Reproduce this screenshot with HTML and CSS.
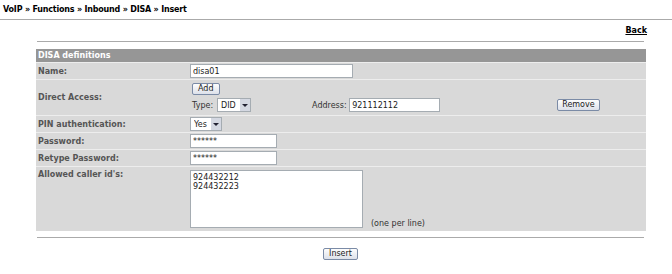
FILE: index.html
```html
<!DOCTYPE html>
<html lang="en">
<head>
    <meta charset="UTF-8">
    <title>VoIP - DISA - Insert</title>
    <link rel="stylesheet" href="styles.css">
</head>
<body>

<div class="crumbs">VoIP &raquo; Functions &raquo; Inbound &raquo; DISA &raquo; Insert</div>

<div class="content">
    <div class="back"><a href="#">Back</a></div>

    <table class="form-table">
        <tr>
            <th colspan="2">DISA definitions</th>
        </tr>
        <tr>
            <td class="label">Name:</td>
            <td><input type="text" class="txt name" value="disa01"></td>
        </tr>
        <tr class="tall">
            <td class="label">Direct Access:</td>
            <td class="access">
                <button class="btn add">Add</button>
                <div class="access-row">
                    <span class="type">Type:
                        <span class="sel"><select><option>DID</option></select><i></i></span>
                    </span>
                    <span class="addr">Address: <input type="text" class="txt address" value="921112112"></span>
                    <button class="btn remove">Remove</button>
                </div>
            </td>
        </tr>
        <tr>
            <td class="label">PIN authentication:</td>
            <td><span class="sel"><select><option>Yes</option><option>No</option></select><i></i></span></td>
        </tr>
        <tr>
            <td class="label">Password:</td>
            <td><input type="text" class="txt pass" value="******"></td>
        </tr>
        <tr>
            <td class="label">Retype Password:</td>
            <td><input type="text" class="txt pass" value="******"></td>
        </tr>
        <tr class="last">
            <td class="label">Allowed caller id's:</td>
            <td>
                <div class="callers">
                    <textarea>924432212
924432223</textarea>
                    <span class="hint">(one per line)</span>
                </div>
            </td>
        </tr>
    </table>

    <div class="actions">
        <button class="btn">Insert</button>
    </div>
</div>

</body>
</html>
```

FILE: styles.css
```css
body {
    margin: 0;
    font-family: 'DejaVu Sans', Verdana, sans-serif;
    font-size: 8px;
    color: #444;
    background: #fff;
}

.crumbs {
    padding: 5px 3px 5px;
    line-height: 9px;
    font-weight: bold;
    color: #000;
    letter-spacing: -0.2px;
    border-bottom: 1px solid #aaa;
}

.content {
    margin: 0 26px 0 36px;
}

.back {
    text-align: right;
    line-height: 9px;
    padding: 6px 0 6px;
    border-bottom: 1px solid #aaa;
    margin: 0 2px 0 1px;
}

.back a {
    color: #000;
    font-weight: bold;
    text-decoration: underline;
    margin-right: -3px;
}

.form-table {
    width: 100%;
    margin-top: 7px;
    border-collapse: separate;
    border-spacing: 0;
}

.form-table th {
    background: #969696;
    color: #fff;
    text-align: left;
    font-weight: bold;
    padding: 0 2px;
    height: 13px;
    box-sizing: border-box;
}

.form-table td {
    background: #d9d9d9;
    border-top: 1px solid #ededed;
    padding: 0 2px;
    height: 17px;
    box-sizing: border-box;
    vertical-align: middle;
}

.form-table tr.tall td {
    height: 36px;
}

.form-table tr.last td {
    height: 65px;
    vertical-align: top;
}

.form-table td.label {
    width: 152px;
    font-weight: bold;
    color: #555;
}

.form-table tr.last td.label {
    padding-top: 3px;
}

.txt {
    font-family: 'DejaVu Sans', sans-serif;
    font-size: 8px;
    color: #222;
    border: 1px solid #a5acb2;
    background: #fff;
    height: 14px;
    padding: 0 2px;
    box-sizing: border-box;
    margin: 0;
    vertical-align: middle;
}

.txt.name { width: 163px; }
.txt.pass { width: 87px; }
.txt.address { width: 91px; }

.btn {
    font-family: 'DejaVu Sans', sans-serif;
    font-size: 8px;
    color: #222;
    height: 12px;
    padding: 0 5px;
    line-height: 10px;
    border: 1px solid #7b8ba6;
    border-radius: 2px;
    background: linear-gradient(#fdfdfd, #dde1ea);
    margin: 0;
}

.btn.add {
    display: block;
    margin-left: 2px;
}

.access-row {
    display: flex;
    align-items: center;
    margin-top: 3px;
}

.type {
    display: flex;
    align-items: center;
    gap: 4px;
    margin-left: 2px;
    color: #333;
}

.addr {
    margin-left: 61px;
    color: #333;
}

.btn.remove {
    margin-left: 117px;
    padding: 0 4px;
}

.sel {
    position: relative;
    display: inline-block;
    vertical-align: middle;
}

.sel select {
    appearance: none;
    -webkit-appearance: none;
    font-family: 'DejaVu Sans', sans-serif;
    font-size: 8px;
    color: #222;
    height: 14px;
    border: 1px solid #a5acb2;
    background: #fff;
    padding: 0 14px 0 3px;
    margin: 0;
    display: block;
}

.sel i {
    position: absolute;
    right: 1px;
    top: 1px;
    width: 10px;
    height: 12px;
    background: #d4d8e2;
    pointer-events: none;
}

.sel i::after {
    content: "";
    position: absolute;
    left: 2px;
    top: 5px;
    border-left: 3px solid transparent;
    border-right: 3px solid transparent;
    border-top: 3px solid #223;
}

.callers {
    display: flex;
    align-items: flex-end;
    padding-top: 3px;
}

.callers textarea {
    width: 173px;
    height: 58px;
    margin: 0;
    box-sizing: border-box;
    border: 1px solid #a5acb2;
    font-family: 'DejaVu Sans', sans-serif;
    font-size: 8px;
    line-height: 9px;
    color: #222;
    padding: 2px;
    resize: none;
    display: block;
}

.hint {
    margin-left: 8px;
    color: #333;
}

.actions {
    border-top: 1px solid #aaa;
    margin: 6px 2px 0 1px;
    padding-top: 10px;
    text-align: center;
}
```
